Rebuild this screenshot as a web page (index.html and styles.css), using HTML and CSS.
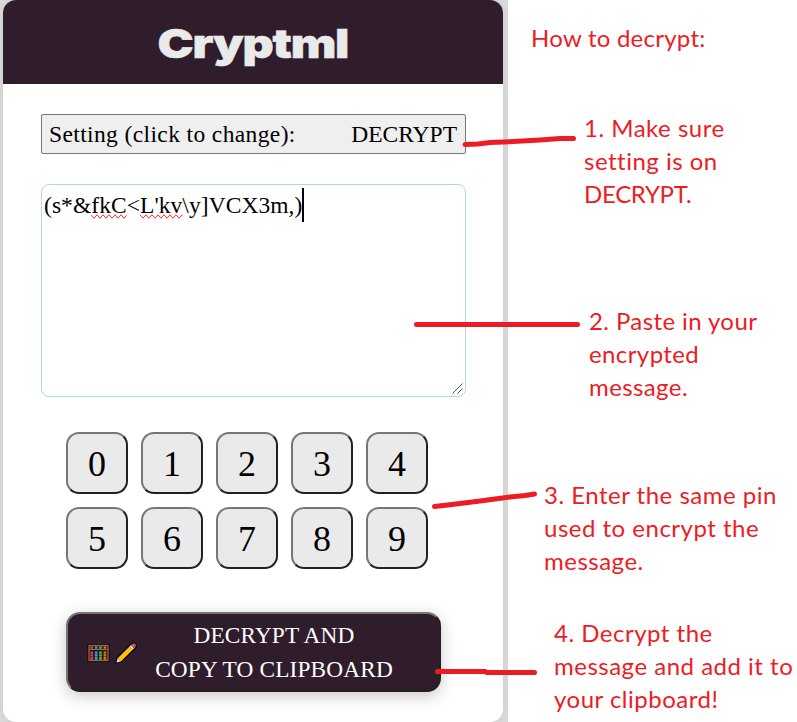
FILE: index.html
```
<!DOCTYPE html>
<html lang="en">
<head>
<meta charset="utf-8">
<title>Cryptml</title>
<link rel="stylesheet" href="styles.css">
</head>
<body>
<main class="page">
  <section class="backdrop">
    <div class="card">
      <header class="header"><h1 class="title">Cryptml</h1></header>
      <div class="setting"><span class="setting-label">Setting (click to change):</span><span>DECRYPT</span></div>
      <div class="message">(s*&amp;<span class="misspelt">fkC</span>&lt;<span class="misspelt">L'kv</span>\y]VCX3m,)<span class="caret"></span>
        <svg class="grip" width="11" height="11" viewBox="0 0 11 11"><path d="M.5 10.500 10.500 .5M5.500 10.500 10.500 5.500" stroke="#555" fill="none"/></svg>
      </div>
      <div class="keys">
        <button class="key">0</button><button class="key">1</button><button class="key">2</button><button class="key">3</button><button class="key">4</button>
        <button class="key">5</button><button class="key">6</button><button class="key">7</button><button class="key">8</button><button class="key">9</button>
      </div>
      <button class="submit">
        <svg class="icons" width="50" height="24" viewBox="0 0 50 24">
          <rect x=".5" y="3" width="22" height="18" fill="#080608"/>
          <rect x="2" y="4.500" width="19" height="15" fill="#21191b" stroke="#9a6842" stroke-width="1.300"/>
          <path d="M2 8.500H21" stroke="#9a6842"/>
          <g fill="none" stroke-width="2.600" stroke-dasharray="2.300 .4">
            <path d="M4.800 5.500V8M4.800 10.500V19" stroke="#e8384f"/>
            <path d="M9.200 5.500V8M9.200 10.500V19" stroke="#3d9be9"/>
            <path d="M13.500 5.500V8M13.500 10.500V19" stroke="#45bd42"/>
            <path d="M17.900 5.500V8M17.900 10.500V19" stroke="#f26b21"/>
          </g>
          <path d="M28 22.800 29.600 16.800 44.300 2Q46.500.3 49 2Q50.800 4.500 49 7.200L34.300 21.600Z" fill="#080608"/>
          <path d="M29.400 21.400 30.700 17.300 33.900 20.500Z" fill="#f5d8cf"/>
          <path d="M30.700 17.300 42.500 5.500 45.700 8.700 33.900 20.500Z" fill="#ffc00e"/>
          <path d="M42.500 5.500 44 4 47.200 7.200 45.700 8.700Z" fill="#d9e2e8"/>
          <path d="M44 4Q46.500 1.300 48.300 2.900Q49.800 4.800 47.200 7.200Z" fill="#e84757"/>
        </svg>
        <span class="submit-text">DECRYPT AND<br>COPY TO CLIPBOARD</span>
      </button>
    </div>
  </section>
  <aside class="notes">
    <p class="note note-title">How to decrypt:</p>
    <p class="note note-setting">1. Make sure<br>setting is on<br><span class="caps">DECRYPT.</span></p>
    <p class="note note-paste">2. Paste in your<br>encrypted<br>message.</p>
    <p class="note note-pin">3. Enter the same pin<br>used to encrypt the<br>message.</p>
    <p class="note note-copy">4. Decrypt the<br>message and add it to<br>your clipboard!</p>
  </aside>
  <svg class="pointers" width="797" height="722" viewBox="0 0 797 722">
    <path d="M465 144.500 L478 144 490 142.500 513 141.500 540 140 560 138.500 573.500 138.500"/>
    <path d="M416.500 324.500H577.500"/>
    <path d="M434.500 506.500 452 504.500 480 501 510 497 525 495.500 534.500 494"/>
    <path d="M437.500 671.500H485L487 672.500H534.500"/>
  </svg>
</main>
</body>
</html>
```

FILE: styles.css
```
* { box-sizing: border-box; }
body { margin: 0; background: #fff; color: #000; }
.page {
  position: relative;
  display: grid;
  grid-template-columns: 508px 1fr;
  width: 797px;
  height: 722px;
  overflow: hidden;
}
.backdrop { background: #dadada; padding: 0 5px 0 3px; overflow: hidden; }
.card {
  height: 722px;
  background: #fff;
  border-radius: 13px;
  overflow: hidden;
  box-shadow: 0 0 8px rgba(0, 0, 0, .06);
  font: 23.5px "Liberation Serif", serif;
}
.header {
  height: 84px;
  background: #2f1d2b;
  display: flex;
  align-items: center;
  justify-content: center;
}
.title {
  margin: 3px 0 0;
  color: #eaeaea;
  font: 900 40px/48px Inter, sans-serif;
  letter-spacing: -1px;
  transform: scaleX(1.21);
  -webkit-text-stroke: .5px #eaeaea;
}
.setting {
  display: flex;
  justify-content: space-between;
  align-items: center;
  width: 425px;
  height: 40px;
  margin: 30px 0 0 38px;
  padding: 0 8px 0 7px;
  background: #efefef;
  border: 1px solid #767676;
  border-radius: 2px;
}
.setting-label { letter-spacing: .38px; }
.message {
  position: relative;
  width: 425px;
  height: 213px;
  margin: 30px 0 0 38px;
  padding: 3px 2px;
  border: 1px solid #add8e6;
  border-radius: 8px;
  line-height: 34px;
  letter-spacing: .06px;
  white-space: nowrap;
}
.misspelt { text-decoration: spelling-error; }
.caret { display: inline-block; width: 2px; height: 34px; background: #000; vertical-align: top; }
.grip { position: absolute; right: 2px; bottom: 2px; }
.keys {
  display: grid;
  grid-template-columns: repeat(5, 62px);
  gap: 13px;
  margin: 35px 0 0 63px;
}
.key {
  height: 62px;
  padding: 1px 0 0;
  border: 2px solid;
  border-color: #767676 #212121 #212121 #767676;
  border-radius: 13px;
  background: #eaeaea;
  color: #000;
  font: 36px "Liberation Serif", serif;
}
.submit {
  display: flex;
  align-items: center;
  width: 375px;
  height: 80px;
  margin: 43px 0 0 63px;
  padding: 0 0 0 19px;
  border: 2px solid;
  border-color: #767676 #212121 #212121 #767676;
  border-radius: 14px;
  background: #2f1d2b;
  color: #fff;
  font: 23.3px/34px "Liberation Serif", serif;
  letter-spacing: .15px;
  box-shadow: 0 4px 16px rgba(0, 0, 0, .22);
}
.icons { margin-top: 2px; }
.submit-text { width: 240px; margin-left: 17px; text-align: center; white-space: nowrap; }
.notes {
  color: #ed1c24;
  font: 24px/33px Lato, sans-serif;
  font-variant-ligatures: none;
  letter-spacing: .5px;
}
.note { margin: 0; white-space: nowrap; }
.note-title { margin: 21px 0 0 23px; letter-spacing: .25px; }
.note-setting { margin: 57px 0 0 76px; }
.note-paste { margin: 94px 0 0 81px; letter-spacing: .4px; }
.note-pin { margin: 75px 0 0 36px; }
.note-copy { margin: 39px 0 0 46px; }
.caps { letter-spacing: -.3px; }
.pointers { position: absolute; inset: 0; pointer-events: none; }
.pointers path { fill: none; stroke: #ed1c24; stroke-width: 5; stroke-linecap: round; stroke-linejoin: round; }
```
